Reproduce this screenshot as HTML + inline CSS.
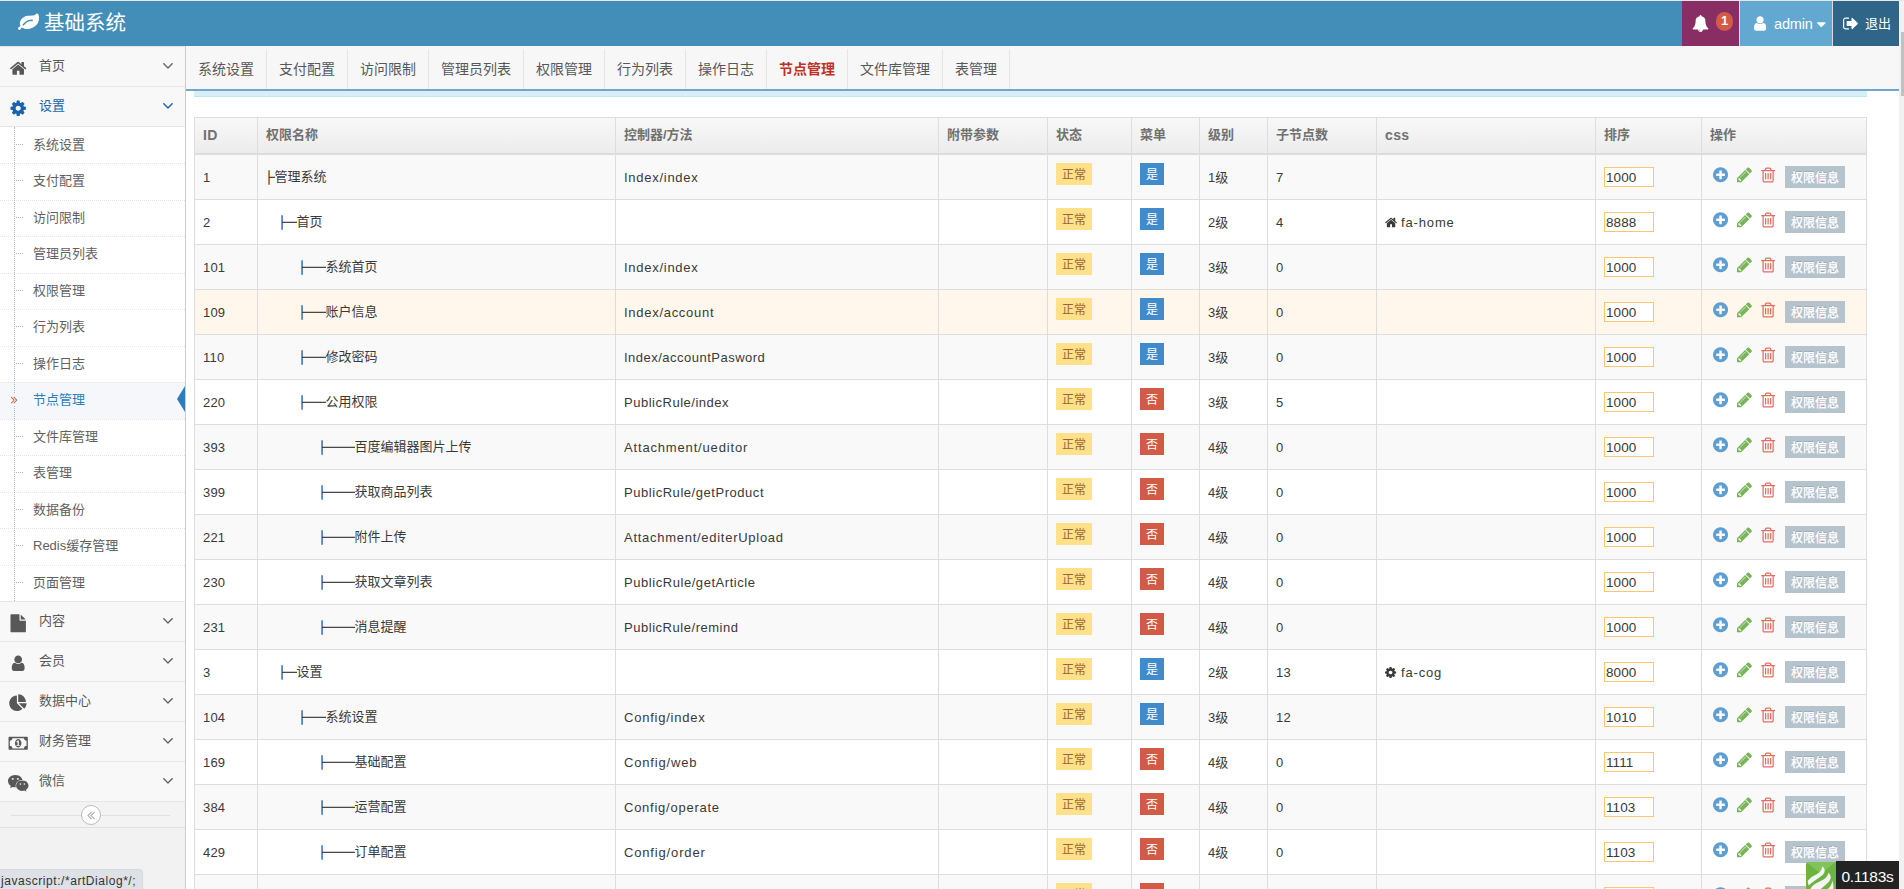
<!DOCTYPE html>
<html lang="zh-CN"><head><meta charset="utf-8"><title>基础系统</title><style>
*{box-sizing:border-box}
html,body{margin:0;padding:0}
body{width:1904px;height:889px;overflow:hidden;position:relative;background:#fff;font-family:"Liberation Sans","Noto Sans CJK SC",sans-serif;font-size:13px;color:#393939;line-height:1.5}
.ic{display:block;position:absolute;overflow:visible}
#topline{position:absolute;left:0;top:0;width:1904px;height:1px;background:#e8e8e6}
#navbar{position:absolute;left:0;top:1px;width:1899px;height:45px;background:#438eb9}
#brand{position:absolute;left:44px;top:0;height:45px;line-height:43px;font-size:20.5px;color:#fff;white-space:nowrap}
.nb{position:absolute;top:0;height:45px;color:#fff}
#nb1{left:1682px;width:57px;background:#892e65}
.gap{position:absolute;top:0;width:1px;height:45px;background:#ddd}
#nb2{left:1740px;width:92px;background:#62a8d1}
#nb3{left:1833px;width:66px;background:#2e6589}
#badge{position:absolute;left:34px;top:11px;width:17px;height:19px;border-radius:10px;background:#d15b47;color:#fff;font-size:13px;font-weight:bold;line-height:18px;text-align:center}
#admin{position:absolute;left:34px;top:0;line-height:47px;font-size:14.5px;letter-spacing:-.15px}
#logout{position:absolute;left:32px;top:0;line-height:45px;font-size:13px}
#sbtrack{position:absolute;left:1899px;top:1px;width:5px;height:888px;background:#f1f1f1}
#sbthumb{position:absolute;left:1901px;top:32.4px;width:3px;height:64px;background:#c1c1c1}
#sidebar{position:absolute;left:0;top:46px;width:186px;height:843px;background:#f2f2f2;border-right:1px solid #ccc}
.mi{position:relative;height:40px;border-top:1px solid #e5e5e5;background:#f8f8f8;color:#585858;font-size:13px;line-height:38px;padding-left:39px}
.mi.open{color:#1963aa}
.sub{background:#fff;border-top:1px solid #e5e5e5;position:relative}
.sub .vline{position:absolute;left:14px;top:0;bottom:0;width:0;border-left:1px dotted #9dbdd6;z-index:1}
.si{position:relative;height:36.5px;border-top:1px dotted #e4e4e4;color:#616161;font-size:13px;line-height:33px;padding-left:33px}
.si.first{border-top-color:transparent;height:36px}
.si .stub{position:absolute;left:16px;top:16px;width:7px;border-top:1px dotted #9dbdd6}
.si.act{background:#f5f7fa;color:#2b7dbc}
.si.act .tri{position:absolute;right:0;top:3px;width:0;height:0;border-top:13.5px solid transparent;border-bottom:13.5px solid transparent;border-right:8px solid #2b7dbc}
.si.act .mask{position:absolute;left:12px;top:10px;width:6px;height:13px;background:#f5f7fa;z-index:2}
#collapse{position:relative;height:27px;border-top:1px solid #e5e5e5;border-bottom:1px solid #e0e0e0;background:#f3f3f3}
#collapse .ln{position:absolute;left:11px;width:159px;top:13px;border-top:1px solid #e0e0e0}
#collapse .cr{position:absolute;left:81px;top:3px;width:20px;height:20px;border-radius:10px;border:1px solid #bbb;background:#fff}
#status{position:absolute;left:0;top:869px;width:143px;height:20px;background:#dee1e6;border-top:1px solid #d5d8dc;border-right:1px solid #d5d8dc;border-top-right-radius:4px;font-size:12px;line-height:22px;color:#333;padding-left:1px;white-space:nowrap;letter-spacing:0.55px}
#tabs{position:absolute;left:186px;top:46px;width:1713px;height:45px;background:#f7f7f7;border-bottom:2px solid #6fa7d0}
.tab{float:left;height:40px;margin-top:3px;padding:0 12px;border-right:1px solid #e5e5e5;font-size:14px;line-height:40px;color:#585858}
.tab.on{color:#c03028;font-weight:bold}
#alert{position:absolute;left:194px;top:91px;width:1673px;height:6px;background:#d9edf7;border-bottom:1px solid #bce8f1}
table{position:absolute;left:194px;top:117px;width:1673px;border-collapse:separate;border-spacing:0;table-layout:fixed;border-right:1px solid #ddd}
th,td{border-left:1px solid #ddd;border-top:1px solid #ddd;padding:0 8px;text-align:left;white-space:nowrap;overflow:hidden;position:relative}
th{height:38px;border-bottom:2px solid #ddd;background:linear-gradient(to bottom,#f8f8f8 0,#ececec 100%);color:#707070;font-weight:bold;font-size:13px;line-height:34px;vertical-align:top}
.hl{font-size:14px;letter-spacing:.35px}
td{height:45px;padding-top:1px;line-height:43px;vertical-align:top;font-size:13px;color:#393939}
.la2{letter-spacing:.2px}
.nm{position:relative;top:-1px}
tbody tr:nth-child(odd) td{background:#f9f9f9}
tbody tr.hov td{background:#fff7eb}
tbody tr:first-child td{border-top:0;height:44px}
.lb{display:inline-block;vertical-align:top;margin-top:7px;height:22px;line-height:25px;padding:0 6px;font-size:12px}
.ly{background:#fee188;color:#996633}
.lp{background:#428bca;color:#fff}
.ld{background:#d15b47;color:#fff}
.inp{display:block;position:absolute;left:8px;top:12px;width:50px;height:20px;border:1px solid #fbc66f;background:#fff;font-size:13.5px;line-height:19.5px;padding-left:1px;color:#393939;letter-spacing:.1px}
.btn{position:absolute;left:83px;top:11px;width:60px;height:22px;background:#b5c3cd;color:#fff;font-size:12px;font-weight:500;line-height:25px;text-align:center;text-shadow:0 1px 0 rgba(255,255,255,.45),0 -1px 0 rgba(0,0,0,.12)}
.pre{font-family:"Noto Sans CJK SC",sans-serif;font-weight:normal;line-height:1;-webkit-text-stroke:0.45px #393939}
.pre i{font-style:normal;display:inline-block;overflow:hidden;vertical-align:top;height:43px;line-height:43px}
#trace{position:absolute;left:1806px;top:861px;width:93px;height:28px}
#trace .g{position:absolute;left:0;top:1px;width:30px;height:30px;background:#6db33f;overflow:hidden;border-top-left-radius:3px}
#trace .k{position:absolute;left:30px;top:0;width:63px;height:28px;background:#232323;color:#fff;font-size:15.5px;line-height:31px;padding-left:5.5px;letter-spacing:-.3px}
</style></head><body>
<div id="topline"></div>
<div id="navbar">
<svg class="ic" width="21.0" height="21" viewBox="0.0 -1536.0 1792 1792" style="left:18px;top:11px"><path fill="#fff" transform="scale(1 -1)" d="M1280 832q0 26 -19 45t-45 19q-172 0 -318 -49.5t-259.5 -134t-235.5 -219.5q-19 -21 -19 -45q0 -26 19 -45t45 -19q24 0 45 19q27 24 74 71t67 66q137 124 268.5 176t313.5 52q26 0 45 19t19 45zM1792 1030q0 -95 -20 -193q-46 -224 -184.5 -383t-357.5 -268 q-214 -108 -438 -108q-148 0 -286 47q-15 5 -88 42t-96 37q-16 0 -39.5 -32t-45 -70t-52.5 -70t-60 -32q-43 0 -63.5 17.5t-45.5 59.5q-2 4 -6 11t-5.5 10t-3 9.5t-1.5 13.5q0 35 31 73.5t68 65.5t68 56t31 48q0 4 -14 38t-16 44q-9 51 -9 104q0 115 43.5 220t119 184.5 t170.5 139t204 95.5q55 18 145 25.5t179.5 9t178.5 6t163.5 24t113.5 56.5l29.5 29.5t29.5 28t27 20t36.5 16t43.5 4.5q39 0 70.5 -46t47.5 -112t24 -124t8 -96z"/></svg><div id="brand">基础系统</div>
<div class="nb" id="nb1"><svg class="ic" width="17.0" height="17" viewBox="0.0 -1536.0 1792 1792" style="left:9.5px;top:13.5px"><path fill="#fff" transform="scale(1 -1)" d="M912 -160q0 16 -16 16q-59 0 -101.5 42.5t-42.5 101.5q0 16 -16 16t-16 -16q0 -73 51.5 -124.5t124.5 -51.5q16 0 16 16zM1728 128q0 -52 -38 -90t-90 -38h-448q0 -106 -75 -181t-181 -75t-181 75t-75 181h-448q-52 0 -90 38t-38 90q50 42 91 88t85 119.5t74.5 158.5 t50 206t19.5 260q0 152 117 282.5t307 158.5q-8 19 -8 39q0 40 28 68t68 28t68 -28t28 -68q0 -20 -8 -39q190 -28 307 -158.5t117 -282.5q0 -139 19.5 -260t50 -206t74.5 -158.5t85 -119.5t91 -88z"/></svg><div id="badge">1</div></div>
<div class="gap" style="left:1739px"></div><div class="gap" style="left:1832px"></div><div class="nb" id="nb2"><svg class="ic" width="12.14" height="17" viewBox="0.0 -1536.0 1280 1792" style="left:13.5px;top:14px"><path fill="#fff" transform="scale(1 -1)" d="M1280 137q0 -109 -62.5 -187t-150.5 -78h-854q-88 0 -150.5 78t-62.5 187q0 85 8.5 160.5t31.5 152t58.5 131t94 89t134.5 34.5q131 -128 313 -128t313 128q76 0 134.5 -34.5t94 -89t58.5 -131t31.5 -152t8.5 -160.5zM1024 1024q0 -159 -112.5 -271.5t-271.5 -112.5 t-271.5 112.5t-112.5 271.5t112.5 271.5t271.5 112.5t271.5 -112.5t112.5 -271.5z"/></svg><div id="admin">admin</div><svg class="ic" width="8.57" height="15" viewBox="0.0 -1536.0 1024 1792" style="left:76.5px;top:16px"><path fill="#fff" transform="scale(1 -1)" d="M1024 832q0 -26 -19 -45l-448 -448q-19 -19 -45 -19t-45 19l-448 448q-19 19 -19 45t19 45t45 19h896q26 0 45 -19t19 -45z"/></svg></div>
<div class="nb" id="nb3"><svg class="ic" width="15.79" height="17" viewBox="0.0 -1536.0 1664 1792" style="left:10px;top:13.5px"><path fill="#fff" transform="scale(1 -1)" d="M640 96q0 -4 1 -20t0.5 -26.5t-3 -23.5t-10 -19.5t-20.5 -6.5h-320q-119 0 -203.5 84.5t-84.5 203.5v704q0 119 84.5 203.5t203.5 84.5h320q13 0 22.5 -9.5t9.5 -22.5q0 -4 1 -20t0.5 -26.5t-3 -23.5t-10 -19.5t-20.5 -6.5h-320q-66 0 -113 -47t-47 -113v-704 q0 -66 47 -113t113 -47h288h11h13t11.5 -1t11.5 -3t8 -5.5t7 -9t2 -13.5zM1568 640q0 -26 -19 -45l-544 -544q-19 -19 -45 -19t-45 19t-19 45v288h-448q-26 0 -45 19t-19 45v384q0 26 19 45t45 19h448v288q0 26 19 45t45 19t45 -19l544 -544q19 -19 19 -45z"/></svg><div id="logout">退出</div></div>
</div>
<div id="sbtrack"></div><div id="sbthumb"></div>
<div id="tabs"><div class="tab">系统设置</div><div class="tab">支付配置</div><div class="tab">访问限制</div><div class="tab">管理员列表</div><div class="tab">权限管理</div><div class="tab">行为列表</div><div class="tab">操作日志</div><div class="tab on">节点管理</div><div class="tab">文件库管理</div><div class="tab">表管理</div></div>
<div id="alert"></div>
<table><colgroup><col style="width:63px"><col style="width:358px"><col style="width:323px"><col style="width:109px"><col style="width:84px"><col style="width:68px"><col style="width:68px"><col style="width:109px"><col style="width:219px"><col style="width:106px"><col style="width:165px"></colgroup><thead><tr><th><span class="hl">ID</span></th><th>权限名称</th><th>控制器/方法</th><th>附带参数</th><th>状态</th><th>菜单</th><th>级别</th><th>子节点数</th><th><span class="hl">css</span></th><th>排序</th><th>操作</th></tr></thead><tbody><tr><td class="la2">1</td><td><span class="nm"><span class="pre" style="margin-left:-3.5px"><i style="width:12px">├</i></span>管理系统</span></td><td><span style="letter-spacing:0.73px">Index/index</span></td><td></td><td><span class="lb ly">正常</span></td><td><span class="lb lp">是</span></td><td>1级</td><td class="la2">7</td><td></td><td><div class="inp">1000</div></td><td><svg class="ic" width="15.09" height="17.6" viewBox="0.0 -1536.0 1536 1792" style="left:10.7px;top:11.2px"><path fill="#5e9fd3" transform="scale(1 -1)" d="M1216 576v128q0 26 -19 45t-45 19h-256v256q0 26 -19 45t-45 19h-128q-26 0 -45 -19t-19 -45v-256h-256q-26 0 -45 -19t-19 -45v-128q0 -26 19 -45t45 -19h256v-256q0 -26 19 -45t45 -19h128q26 0 45 19t19 45v256h256q26 0 45 19t19 45zM1536 640q0 -209 -103 -385.5 t-279.5 -279.5t-385.5 -103t-385.5 103t-279.5 279.5t-103 385.5t103 385.5t279.5 279.5t385.5 103t385.5 -103t279.5 -279.5t103 -385.5z"/></svg><svg class="ic" width="15.09" height="17.6" viewBox="0.0 -1536.0 1536 1792" style="left:34.8px;top:11.2px"><path fill="#78b45a" transform="scale(1 -1)" d="M363 0l91 91l-235 235l-91 -91v-107h128v-128h107zM886 928q0 22 -22 22q-10 0 -17 -7l-542 -542q-7 -7 -7 -17q0 -22 22 -22q10 0 17 7l542 542q7 7 7 17zM832 1120l416 -416l-832 -832h-416v416zM1515 1024q0 -53 -37 -90l-166 -166l-416 416l166 165q36 38 90 38 q53 0 91 -38l235 -234q37 -39 37 -91z"/></svg><svg class="ic" width="13.83" height="17.6" viewBox="-20.4 -1556.4 1408 1792" style="left:59px;top:11px"><path fill="#e0705c" transform="scale(1 -1)" d="M512 800v-576q0 -14 -9 -23t-23 -9h-64q-14 0 -23 9t-9 23v576q0 14 9 23t23 9h64q14 0 23 -9t9 -23zM768 800v-576q0 -14 -9 -23t-23 -9h-64q-14 0 -23 9t-9 23v576q0 14 9 23t23 9h64q14 0 23 -9t9 -23zM1024 800v-576q0 -14 -9 -23t-23 -9h-64q-14 0 -23 9t-9 23v576 q0 14 9 23t23 9h64q14 0 23 -9t9 -23zM1152 76v948h-896v-948q0 -22 7 -40.5t14.5 -27t10.5 -8.5h832q3 0 10.5 8.5t14.5 27t7 40.5zM480 1152h448l-48 117q-7 9 -17 11h-317q-10 -2 -17 -11zM1408 1120v-64q0 -14 -9 -23t-23 -9h-96v-948q0 -83 -47 -143.5t-113 -60.5h-832 q-66 0 -113 58.5t-47 141.5v952h-96q-14 0 -23 9t-9 23v64q0 14 9 23t23 9h309l70 167q15 37 54 63t79 26h320q40 0 79 -26t54 -63l70 -167h309q14 0 23 -9t9 -23z"/></svg><div class="btn">权限信息</div></td></tr><tr><td class="la2">2</td><td><span class="nm"><span class="pre" style="margin-left:9.5px"><i style="width:12px">├</i><i style="width:9px">─</i></span>首页</span></td><td></td><td></td><td><span class="lb ly">正常</span></td><td><span class="lb lp">是</span></td><td>2级</td><td class="la2">4</td><td><svg class="ic" width="12.07" height="13" viewBox="0.0 -1536.0 1664 1792" style="left:8px;top:16px"><path fill="#393939" transform="scale(1 -1)" d="M1408 544v-480q0 -26 -19 -45t-45 -19h-384v384h-256v-384h-384q-26 0 -45 19t-19 45v480q0 1 0.5 3t0.5 3l575 474l575 -474q1 -2 1 -6zM1631 613l-62 -74q-8 -9 -21 -11h-3q-13 0 -21 7l-692 577l-692 -577q-12 -8 -24 -7q-13 2 -21 11l-62 74q-8 10 -7 23.5t11 21.5 l719 599q32 26 76 26t76 -26l244 -204v195q0 14 9 23t23 9h192q14 0 23 -9t9 -23v-408l219 -182q10 -8 11 -21.5t-7 -23.5z"/></svg><span style="padding-left:16px;letter-spacing:0.849px">fa-home</span></td><td><div class="inp">8888</div></td><td><svg class="ic" width="15.09" height="17.6" viewBox="0.0 -1536.0 1536 1792" style="left:10.7px;top:11.2px"><path fill="#5e9fd3" transform="scale(1 -1)" d="M1216 576v128q0 26 -19 45t-45 19h-256v256q0 26 -19 45t-45 19h-128q-26 0 -45 -19t-19 -45v-256h-256q-26 0 -45 -19t-19 -45v-128q0 -26 19 -45t45 -19h256v-256q0 -26 19 -45t45 -19h128q26 0 45 19t19 45v256h256q26 0 45 19t19 45zM1536 640q0 -209 -103 -385.5 t-279.5 -279.5t-385.5 -103t-385.5 103t-279.5 279.5t-103 385.5t103 385.5t279.5 279.5t385.5 103t385.5 -103t279.5 -279.5t103 -385.5z"/></svg><svg class="ic" width="15.09" height="17.6" viewBox="0.0 -1536.0 1536 1792" style="left:34.8px;top:11.2px"><path fill="#78b45a" transform="scale(1 -1)" d="M363 0l91 91l-235 235l-91 -91v-107h128v-128h107zM886 928q0 22 -22 22q-10 0 -17 -7l-542 -542q-7 -7 -7 -17q0 -22 22 -22q10 0 17 7l542 542q7 7 7 17zM832 1120l416 -416l-832 -832h-416v416zM1515 1024q0 -53 -37 -90l-166 -166l-416 416l166 165q36 38 90 38 q53 0 91 -38l235 -234q37 -39 37 -91z"/></svg><svg class="ic" width="13.83" height="17.6" viewBox="-20.4 -1556.4 1408 1792" style="left:59px;top:11px"><path fill="#e0705c" transform="scale(1 -1)" d="M512 800v-576q0 -14 -9 -23t-23 -9h-64q-14 0 -23 9t-9 23v576q0 14 9 23t23 9h64q14 0 23 -9t9 -23zM768 800v-576q0 -14 -9 -23t-23 -9h-64q-14 0 -23 9t-9 23v576q0 14 9 23t23 9h64q14 0 23 -9t9 -23zM1024 800v-576q0 -14 -9 -23t-23 -9h-64q-14 0 -23 9t-9 23v576 q0 14 9 23t23 9h64q14 0 23 -9t9 -23zM1152 76v948h-896v-948q0 -22 7 -40.5t14.5 -27t10.5 -8.5h832q3 0 10.5 8.5t14.5 27t7 40.5zM480 1152h448l-48 117q-7 9 -17 11h-317q-10 -2 -17 -11zM1408 1120v-64q0 -14 -9 -23t-23 -9h-96v-948q0 -83 -47 -143.5t-113 -60.5h-832 q-66 0 -113 58.5t-47 141.5v952h-96q-14 0 -23 9t-9 23v64q0 14 9 23t23 9h309l70 167q15 37 54 63t79 26h320q40 0 79 -26t54 -63l70 -167h309q14 0 23 -9t9 -23z"/></svg><div class="btn">权限信息</div></td></tr><tr><td class="la2">101</td><td><span class="nm"><span class="pre" style="margin-left:29.5px"><i style="width:12px">├</i><i style="width:9px">─</i><i style="width:9px">─</i></span>系统首页</span></td><td><span style="letter-spacing:0.73px">Index/index</span></td><td></td><td><span class="lb ly">正常</span></td><td><span class="lb lp">是</span></td><td>3级</td><td class="la2">0</td><td></td><td><div class="inp">1000</div></td><td><svg class="ic" width="15.09" height="17.6" viewBox="0.0 -1536.0 1536 1792" style="left:10.7px;top:11.2px"><path fill="#5e9fd3" transform="scale(1 -1)" d="M1216 576v128q0 26 -19 45t-45 19h-256v256q0 26 -19 45t-45 19h-128q-26 0 -45 -19t-19 -45v-256h-256q-26 0 -45 -19t-19 -45v-128q0 -26 19 -45t45 -19h256v-256q0 -26 19 -45t45 -19h128q26 0 45 19t19 45v256h256q26 0 45 19t19 45zM1536 640q0 -209 -103 -385.5 t-279.5 -279.5t-385.5 -103t-385.5 103t-279.5 279.5t-103 385.5t103 385.5t279.5 279.5t385.5 103t385.5 -103t279.5 -279.5t103 -385.5z"/></svg><svg class="ic" width="15.09" height="17.6" viewBox="0.0 -1536.0 1536 1792" style="left:34.8px;top:11.2px"><path fill="#78b45a" transform="scale(1 -1)" d="M363 0l91 91l-235 235l-91 -91v-107h128v-128h107zM886 928q0 22 -22 22q-10 0 -17 -7l-542 -542q-7 -7 -7 -17q0 -22 22 -22q10 0 17 7l542 542q7 7 7 17zM832 1120l416 -416l-832 -832h-416v416zM1515 1024q0 -53 -37 -90l-166 -166l-416 416l166 165q36 38 90 38 q53 0 91 -38l235 -234q37 -39 37 -91z"/></svg><svg class="ic" width="13.83" height="17.6" viewBox="-20.4 -1556.4 1408 1792" style="left:59px;top:11px"><path fill="#e0705c" transform="scale(1 -1)" d="M512 800v-576q0 -14 -9 -23t-23 -9h-64q-14 0 -23 9t-9 23v576q0 14 9 23t23 9h64q14 0 23 -9t9 -23zM768 800v-576q0 -14 -9 -23t-23 -9h-64q-14 0 -23 9t-9 23v576q0 14 9 23t23 9h64q14 0 23 -9t9 -23zM1024 800v-576q0 -14 -9 -23t-23 -9h-64q-14 0 -23 9t-9 23v576 q0 14 9 23t23 9h64q14 0 23 -9t9 -23zM1152 76v948h-896v-948q0 -22 7 -40.5t14.5 -27t10.5 -8.5h832q3 0 10.5 8.5t14.5 27t7 40.5zM480 1152h448l-48 117q-7 9 -17 11h-317q-10 -2 -17 -11zM1408 1120v-64q0 -14 -9 -23t-23 -9h-96v-948q0 -83 -47 -143.5t-113 -60.5h-832 q-66 0 -113 58.5t-47 141.5v952h-96q-14 0 -23 9t-9 23v64q0 14 9 23t23 9h309l70 167q15 37 54 63t79 26h320q40 0 79 -26t54 -63l70 -167h309q14 0 23 -9t9 -23z"/></svg><div class="btn">权限信息</div></td></tr><tr class="hov"><td class="la2">109</td><td><span class="nm"><span class="pre" style="margin-left:29.5px"><i style="width:12px">├</i><i style="width:9px">─</i><i style="width:9px">─</i></span>账户信息</span></td><td><span style="letter-spacing:0.716px">Index/account</span></td><td></td><td><span class="lb ly">正常</span></td><td><span class="lb lp">是</span></td><td>3级</td><td class="la2">0</td><td></td><td><div class="inp">1000</div></td><td><svg class="ic" width="15.09" height="17.6" viewBox="0.0 -1536.0 1536 1792" style="left:10.7px;top:11.2px"><path fill="#5e9fd3" transform="scale(1 -1)" d="M1216 576v128q0 26 -19 45t-45 19h-256v256q0 26 -19 45t-45 19h-128q-26 0 -45 -19t-19 -45v-256h-256q-26 0 -45 -19t-19 -45v-128q0 -26 19 -45t45 -19h256v-256q0 -26 19 -45t45 -19h128q26 0 45 19t19 45v256h256q26 0 45 19t19 45zM1536 640q0 -209 -103 -385.5 t-279.5 -279.5t-385.5 -103t-385.5 103t-279.5 279.5t-103 385.5t103 385.5t279.5 279.5t385.5 103t385.5 -103t279.5 -279.5t103 -385.5z"/></svg><svg class="ic" width="15.09" height="17.6" viewBox="0.0 -1536.0 1536 1792" style="left:34.8px;top:11.2px"><path fill="#78b45a" transform="scale(1 -1)" d="M363 0l91 91l-235 235l-91 -91v-107h128v-128h107zM886 928q0 22 -22 22q-10 0 -17 -7l-542 -542q-7 -7 -7 -17q0 -22 22 -22q10 0 17 7l542 542q7 7 7 17zM832 1120l416 -416l-832 -832h-416v416zM1515 1024q0 -53 -37 -90l-166 -166l-416 416l166 165q36 38 90 38 q53 0 91 -38l235 -234q37 -39 37 -91z"/></svg><svg class="ic" width="13.83" height="17.6" viewBox="-20.4 -1556.4 1408 1792" style="left:59px;top:11px"><path fill="#e0705c" transform="scale(1 -1)" d="M512 800v-576q0 -14 -9 -23t-23 -9h-64q-14 0 -23 9t-9 23v576q0 14 9 23t23 9h64q14 0 23 -9t9 -23zM768 800v-576q0 -14 -9 -23t-23 -9h-64q-14 0 -23 9t-9 23v576q0 14 9 23t23 9h64q14 0 23 -9t9 -23zM1024 800v-576q0 -14 -9 -23t-23 -9h-64q-14 0 -23 9t-9 23v576 q0 14 9 23t23 9h64q14 0 23 -9t9 -23zM1152 76v948h-896v-948q0 -22 7 -40.5t14.5 -27t10.5 -8.5h832q3 0 10.5 8.5t14.5 27t7 40.5zM480 1152h448l-48 117q-7 9 -17 11h-317q-10 -2 -17 -11zM1408 1120v-64q0 -14 -9 -23t-23 -9h-96v-948q0 -83 -47 -143.5t-113 -60.5h-832 q-66 0 -113 58.5t-47 141.5v952h-96q-14 0 -23 9t-9 23v64q0 14 9 23t23 9h309l70 167q15 37 54 63t79 26h320q40 0 79 -26t54 -63l70 -167h309q14 0 23 -9t9 -23z"/></svg><div class="btn">权限信息</div></td></tr><tr><td class="la2">110</td><td><span class="nm"><span class="pre" style="margin-left:29.5px"><i style="width:12px">├</i><i style="width:9px">─</i><i style="width:9px">─</i></span>修改密码</span></td><td><span style="letter-spacing:0.488px">Index/accountPasword</span></td><td></td><td><span class="lb ly">正常</span></td><td><span class="lb lp">是</span></td><td>3级</td><td class="la2">0</td><td></td><td><div class="inp">1000</div></td><td><svg class="ic" width="15.09" height="17.6" viewBox="0.0 -1536.0 1536 1792" style="left:10.7px;top:11.2px"><path fill="#5e9fd3" transform="scale(1 -1)" d="M1216 576v128q0 26 -19 45t-45 19h-256v256q0 26 -19 45t-45 19h-128q-26 0 -45 -19t-19 -45v-256h-256q-26 0 -45 -19t-19 -45v-128q0 -26 19 -45t45 -19h256v-256q0 -26 19 -45t45 -19h128q26 0 45 19t19 45v256h256q26 0 45 19t19 45zM1536 640q0 -209 -103 -385.5 t-279.5 -279.5t-385.5 -103t-385.5 103t-279.5 279.5t-103 385.5t103 385.5t279.5 279.5t385.5 103t385.5 -103t279.5 -279.5t103 -385.5z"/></svg><svg class="ic" width="15.09" height="17.6" viewBox="0.0 -1536.0 1536 1792" style="left:34.8px;top:11.2px"><path fill="#78b45a" transform="scale(1 -1)" d="M363 0l91 91l-235 235l-91 -91v-107h128v-128h107zM886 928q0 22 -22 22q-10 0 -17 -7l-542 -542q-7 -7 -7 -17q0 -22 22 -22q10 0 17 7l542 542q7 7 7 17zM832 1120l416 -416l-832 -832h-416v416zM1515 1024q0 -53 -37 -90l-166 -166l-416 416l166 165q36 38 90 38 q53 0 91 -38l235 -234q37 -39 37 -91z"/></svg><svg class="ic" width="13.83" height="17.6" viewBox="-20.4 -1556.4 1408 1792" style="left:59px;top:11px"><path fill="#e0705c" transform="scale(1 -1)" d="M512 800v-576q0 -14 -9 -23t-23 -9h-64q-14 0 -23 9t-9 23v576q0 14 9 23t23 9h64q14 0 23 -9t9 -23zM768 800v-576q0 -14 -9 -23t-23 -9h-64q-14 0 -23 9t-9 23v576q0 14 9 23t23 9h64q14 0 23 -9t9 -23zM1024 800v-576q0 -14 -9 -23t-23 -9h-64q-14 0 -23 9t-9 23v576 q0 14 9 23t23 9h64q14 0 23 -9t9 -23zM1152 76v948h-896v-948q0 -22 7 -40.5t14.5 -27t10.5 -8.5h832q3 0 10.5 8.5t14.5 27t7 40.5zM480 1152h448l-48 117q-7 9 -17 11h-317q-10 -2 -17 -11zM1408 1120v-64q0 -14 -9 -23t-23 -9h-96v-948q0 -83 -47 -143.5t-113 -60.5h-832 q-66 0 -113 58.5t-47 141.5v952h-96q-14 0 -23 9t-9 23v64q0 14 9 23t23 9h309l70 167q15 37 54 63t79 26h320q40 0 79 -26t54 -63l70 -167h309q14 0 23 -9t9 -23z"/></svg><div class="btn">权限信息</div></td></tr><tr><td class="la2">220</td><td><span class="nm"><span class="pre" style="margin-left:29.5px"><i style="width:12px">├</i><i style="width:9px">─</i><i style="width:9px">─</i></span>公用权限</span></td><td><span style="letter-spacing:0.514px">PublicRule/index</span></td><td></td><td><span class="lb ly">正常</span></td><td><span class="lb ld">否</span></td><td>3级</td><td class="la2">5</td><td></td><td><div class="inp">1000</div></td><td><svg class="ic" width="15.09" height="17.6" viewBox="0.0 -1536.0 1536 1792" style="left:10.7px;top:11.2px"><path fill="#5e9fd3" transform="scale(1 -1)" d="M1216 576v128q0 26 -19 45t-45 19h-256v256q0 26 -19 45t-45 19h-128q-26 0 -45 -19t-19 -45v-256h-256q-26 0 -45 -19t-19 -45v-128q0 -26 19 -45t45 -19h256v-256q0 -26 19 -45t45 -19h128q26 0 45 19t19 45v256h256q26 0 45 19t19 45zM1536 640q0 -209 -103 -385.5 t-279.5 -279.5t-385.5 -103t-385.5 103t-279.5 279.5t-103 385.5t103 385.5t279.5 279.5t385.5 103t385.5 -103t279.5 -279.5t103 -385.5z"/></svg><svg class="ic" width="15.09" height="17.6" viewBox="0.0 -1536.0 1536 1792" style="left:34.8px;top:11.2px"><path fill="#78b45a" transform="scale(1 -1)" d="M363 0l91 91l-235 235l-91 -91v-107h128v-128h107zM886 928q0 22 -22 22q-10 0 -17 -7l-542 -542q-7 -7 -7 -17q0 -22 22 -22q10 0 17 7l542 542q7 7 7 17zM832 1120l416 -416l-832 -832h-416v416zM1515 1024q0 -53 -37 -90l-166 -166l-416 416l166 165q36 38 90 38 q53 0 91 -38l235 -234q37 -39 37 -91z"/></svg><svg class="ic" width="13.83" height="17.6" viewBox="-20.4 -1556.4 1408 1792" style="left:59px;top:11px"><path fill="#e0705c" transform="scale(1 -1)" d="M512 800v-576q0 -14 -9 -23t-23 -9h-64q-14 0 -23 9t-9 23v576q0 14 9 23t23 9h64q14 0 23 -9t9 -23zM768 800v-576q0 -14 -9 -23t-23 -9h-64q-14 0 -23 9t-9 23v576q0 14 9 23t23 9h64q14 0 23 -9t9 -23zM1024 800v-576q0 -14 -9 -23t-23 -9h-64q-14 0 -23 9t-9 23v576 q0 14 9 23t23 9h64q14 0 23 -9t9 -23zM1152 76v948h-896v-948q0 -22 7 -40.5t14.5 -27t10.5 -8.5h832q3 0 10.5 8.5t14.5 27t7 40.5zM480 1152h448l-48 117q-7 9 -17 11h-317q-10 -2 -17 -11zM1408 1120v-64q0 -14 -9 -23t-23 -9h-96v-948q0 -83 -47 -143.5t-113 -60.5h-832 q-66 0 -113 58.5t-47 141.5v952h-96q-14 0 -23 9t-9 23v64q0 14 9 23t23 9h309l70 167q15 37 54 63t79 26h320q40 0 79 -26t54 -63l70 -167h309q14 0 23 -9t9 -23z"/></svg><div class="btn">权限信息</div></td></tr><tr><td class="la2">393</td><td><span class="nm"><span class="pre" style="margin-left:49.5px"><i style="width:12px">├</i><i style="width:9px">─</i><i style="width:9px">─</i><i style="width:9px">─</i></span>百度编辑器图片上传</span></td><td><span style="letter-spacing:0.834px">Attachment/ueditor</span></td><td></td><td><span class="lb ly">正常</span></td><td><span class="lb ld">否</span></td><td>4级</td><td class="la2">0</td><td></td><td><div class="inp">1000</div></td><td><svg class="ic" width="15.09" height="17.6" viewBox="0.0 -1536.0 1536 1792" style="left:10.7px;top:11.2px"><path fill="#5e9fd3" transform="scale(1 -1)" d="M1216 576v128q0 26 -19 45t-45 19h-256v256q0 26 -19 45t-45 19h-128q-26 0 -45 -19t-19 -45v-256h-256q-26 0 -45 -19t-19 -45v-128q0 -26 19 -45t45 -19h256v-256q0 -26 19 -45t45 -19h128q26 0 45 19t19 45v256h256q26 0 45 19t19 45zM1536 640q0 -209 -103 -385.5 t-279.5 -279.5t-385.5 -103t-385.5 103t-279.5 279.5t-103 385.5t103 385.5t279.5 279.5t385.5 103t385.5 -103t279.5 -279.5t103 -385.5z"/></svg><svg class="ic" width="15.09" height="17.6" viewBox="0.0 -1536.0 1536 1792" style="left:34.8px;top:11.2px"><path fill="#78b45a" transform="scale(1 -1)" d="M363 0l91 91l-235 235l-91 -91v-107h128v-128h107zM886 928q0 22 -22 22q-10 0 -17 -7l-542 -542q-7 -7 -7 -17q0 -22 22 -22q10 0 17 7l542 542q7 7 7 17zM832 1120l416 -416l-832 -832h-416v416zM1515 1024q0 -53 -37 -90l-166 -166l-416 416l166 165q36 38 90 38 q53 0 91 -38l235 -234q37 -39 37 -91z"/></svg><svg class="ic" width="13.83" height="17.6" viewBox="-20.4 -1556.4 1408 1792" style="left:59px;top:11px"><path fill="#e0705c" transform="scale(1 -1)" d="M512 800v-576q0 -14 -9 -23t-23 -9h-64q-14 0 -23 9t-9 23v576q0 14 9 23t23 9h64q14 0 23 -9t9 -23zM768 800v-576q0 -14 -9 -23t-23 -9h-64q-14 0 -23 9t-9 23v576q0 14 9 23t23 9h64q14 0 23 -9t9 -23zM1024 800v-576q0 -14 -9 -23t-23 -9h-64q-14 0 -23 9t-9 23v576 q0 14 9 23t23 9h64q14 0 23 -9t9 -23zM1152 76v948h-896v-948q0 -22 7 -40.5t14.5 -27t10.5 -8.5h832q3 0 10.5 8.5t14.5 27t7 40.5zM480 1152h448l-48 117q-7 9 -17 11h-317q-10 -2 -17 -11zM1408 1120v-64q0 -14 -9 -23t-23 -9h-96v-948q0 -83 -47 -143.5t-113 -60.5h-832 q-66 0 -113 58.5t-47 141.5v952h-96q-14 0 -23 9t-9 23v64q0 14 9 23t23 9h309l70 167q15 37 54 63t79 26h320q40 0 79 -26t54 -63l70 -167h309q14 0 23 -9t9 -23z"/></svg><div class="btn">权限信息</div></td></tr><tr><td class="la2">399</td><td><span class="nm"><span class="pre" style="margin-left:49.5px"><i style="width:12px">├</i><i style="width:9px">─</i><i style="width:9px">─</i><i style="width:9px">─</i></span>获取商品列表</span></td><td><span style="letter-spacing:0.545px">PublicRule/getProduct</span></td><td></td><td><span class="lb ly">正常</span></td><td><span class="lb ld">否</span></td><td>4级</td><td class="la2">0</td><td></td><td><div class="inp">1000</div></td><td><svg class="ic" width="15.09" height="17.6" viewBox="0.0 -1536.0 1536 1792" style="left:10.7px;top:11.2px"><path fill="#5e9fd3" transform="scale(1 -1)" d="M1216 576v128q0 26 -19 45t-45 19h-256v256q0 26 -19 45t-45 19h-128q-26 0 -45 -19t-19 -45v-256h-256q-26 0 -45 -19t-19 -45v-128q0 -26 19 -45t45 -19h256v-256q0 -26 19 -45t45 -19h128q26 0 45 19t19 45v256h256q26 0 45 19t19 45zM1536 640q0 -209 -103 -385.5 t-279.5 -279.5t-385.5 -103t-385.5 103t-279.5 279.5t-103 385.5t103 385.5t279.5 279.5t385.5 103t385.5 -103t279.5 -279.5t103 -385.5z"/></svg><svg class="ic" width="15.09" height="17.6" viewBox="0.0 -1536.0 1536 1792" style="left:34.8px;top:11.2px"><path fill="#78b45a" transform="scale(1 -1)" d="M363 0l91 91l-235 235l-91 -91v-107h128v-128h107zM886 928q0 22 -22 22q-10 0 -17 -7l-542 -542q-7 -7 -7 -17q0 -22 22 -22q10 0 17 7l542 542q7 7 7 17zM832 1120l416 -416l-832 -832h-416v416zM1515 1024q0 -53 -37 -90l-166 -166l-416 416l166 165q36 38 90 38 q53 0 91 -38l235 -234q37 -39 37 -91z"/></svg><svg class="ic" width="13.83" height="17.6" viewBox="-20.4 -1556.4 1408 1792" style="left:59px;top:11px"><path fill="#e0705c" transform="scale(1 -1)" d="M512 800v-576q0 -14 -9 -23t-23 -9h-64q-14 0 -23 9t-9 23v576q0 14 9 23t23 9h64q14 0 23 -9t9 -23zM768 800v-576q0 -14 -9 -23t-23 -9h-64q-14 0 -23 9t-9 23v576q0 14 9 23t23 9h64q14 0 23 -9t9 -23zM1024 800v-576q0 -14 -9 -23t-23 -9h-64q-14 0 -23 9t-9 23v576 q0 14 9 23t23 9h64q14 0 23 -9t9 -23zM1152 76v948h-896v-948q0 -22 7 -40.5t14.5 -27t10.5 -8.5h832q3 0 10.5 8.5t14.5 27t7 40.5zM480 1152h448l-48 117q-7 9 -17 11h-317q-10 -2 -17 -11zM1408 1120v-64q0 -14 -9 -23t-23 -9h-96v-948q0 -83 -47 -143.5t-113 -60.5h-832 q-66 0 -113 58.5t-47 141.5v952h-96q-14 0 -23 9t-9 23v64q0 14 9 23t23 9h309l70 167q15 37 54 63t79 26h320q40 0 79 -26t54 -63l70 -167h309q14 0 23 -9t9 -23z"/></svg><div class="btn">权限信息</div></td></tr><tr><td class="la2">221</td><td><span class="nm"><span class="pre" style="margin-left:49.5px"><i style="width:12px">├</i><i style="width:9px">─</i><i style="width:9px">─</i><i style="width:9px">─</i></span>附件上传</span></td><td><span style="letter-spacing:0.725px">Attachment/editerUpload</span></td><td></td><td><span class="lb ly">正常</span></td><td><span class="lb ld">否</span></td><td>4级</td><td class="la2">0</td><td></td><td><div class="inp">1000</div></td><td><svg class="ic" width="15.09" height="17.6" viewBox="0.0 -1536.0 1536 1792" style="left:10.7px;top:11.2px"><path fill="#5e9fd3" transform="scale(1 -1)" d="M1216 576v128q0 26 -19 45t-45 19h-256v256q0 26 -19 45t-45 19h-128q-26 0 -45 -19t-19 -45v-256h-256q-26 0 -45 -19t-19 -45v-128q0 -26 19 -45t45 -19h256v-256q0 -26 19 -45t45 -19h128q26 0 45 19t19 45v256h256q26 0 45 19t19 45zM1536 640q0 -209 -103 -385.5 t-279.5 -279.5t-385.5 -103t-385.5 103t-279.5 279.5t-103 385.5t103 385.5t279.5 279.5t385.5 103t385.5 -103t279.5 -279.5t103 -385.5z"/></svg><svg class="ic" width="15.09" height="17.6" viewBox="0.0 -1536.0 1536 1792" style="left:34.8px;top:11.2px"><path fill="#78b45a" transform="scale(1 -1)" d="M363 0l91 91l-235 235l-91 -91v-107h128v-128h107zM886 928q0 22 -22 22q-10 0 -17 -7l-542 -542q-7 -7 -7 -17q0 -22 22 -22q10 0 17 7l542 542q7 7 7 17zM832 1120l416 -416l-832 -832h-416v416zM1515 1024q0 -53 -37 -90l-166 -166l-416 416l166 165q36 38 90 38 q53 0 91 -38l235 -234q37 -39 37 -91z"/></svg><svg class="ic" width="13.83" height="17.6" viewBox="-20.4 -1556.4 1408 1792" style="left:59px;top:11px"><path fill="#e0705c" transform="scale(1 -1)" d="M512 800v-576q0 -14 -9 -23t-23 -9h-64q-14 0 -23 9t-9 23v576q0 14 9 23t23 9h64q14 0 23 -9t9 -23zM768 800v-576q0 -14 -9 -23t-23 -9h-64q-14 0 -23 9t-9 23v576q0 14 9 23t23 9h64q14 0 23 -9t9 -23zM1024 800v-576q0 -14 -9 -23t-23 -9h-64q-14 0 -23 9t-9 23v576 q0 14 9 23t23 9h64q14 0 23 -9t9 -23zM1152 76v948h-896v-948q0 -22 7 -40.5t14.5 -27t10.5 -8.5h832q3 0 10.5 8.5t14.5 27t7 40.5zM480 1152h448l-48 117q-7 9 -17 11h-317q-10 -2 -17 -11zM1408 1120v-64q0 -14 -9 -23t-23 -9h-96v-948q0 -83 -47 -143.5t-113 -60.5h-832 q-66 0 -113 58.5t-47 141.5v952h-96q-14 0 -23 9t-9 23v64q0 14 9 23t23 9h309l70 167q15 37 54 63t79 26h320q40 0 79 -26t54 -63l70 -167h309q14 0 23 -9t9 -23z"/></svg><div class="btn">权限信息</div></td></tr><tr><td class="la2">230</td><td><span class="nm"><span class="pre" style="margin-left:49.5px"><i style="width:12px">├</i><i style="width:9px">─</i><i style="width:9px">─</i><i style="width:9px">─</i></span>获取文章列表</span></td><td><span style="letter-spacing:0.555px">PublicRule/getArticle</span></td><td></td><td><span class="lb ly">正常</span></td><td><span class="lb ld">否</span></td><td>4级</td><td class="la2">0</td><td></td><td><div class="inp">1000</div></td><td><svg class="ic" width="15.09" height="17.6" viewBox="0.0 -1536.0 1536 1792" style="left:10.7px;top:11.2px"><path fill="#5e9fd3" transform="scale(1 -1)" d="M1216 576v128q0 26 -19 45t-45 19h-256v256q0 26 -19 45t-45 19h-128q-26 0 -45 -19t-19 -45v-256h-256q-26 0 -45 -19t-19 -45v-128q0 -26 19 -45t45 -19h256v-256q0 -26 19 -45t45 -19h128q26 0 45 19t19 45v256h256q26 0 45 19t19 45zM1536 640q0 -209 -103 -385.5 t-279.5 -279.5t-385.5 -103t-385.5 103t-279.5 279.5t-103 385.5t103 385.5t279.5 279.5t385.5 103t385.5 -103t279.5 -279.5t103 -385.5z"/></svg><svg class="ic" width="15.09" height="17.6" viewBox="0.0 -1536.0 1536 1792" style="left:34.8px;top:11.2px"><path fill="#78b45a" transform="scale(1 -1)" d="M363 0l91 91l-235 235l-91 -91v-107h128v-128h107zM886 928q0 22 -22 22q-10 0 -17 -7l-542 -542q-7 -7 -7 -17q0 -22 22 -22q10 0 17 7l542 542q7 7 7 17zM832 1120l416 -416l-832 -832h-416v416zM1515 1024q0 -53 -37 -90l-166 -166l-416 416l166 165q36 38 90 38 q53 0 91 -38l235 -234q37 -39 37 -91z"/></svg><svg class="ic" width="13.83" height="17.6" viewBox="-20.4 -1556.4 1408 1792" style="left:59px;top:11px"><path fill="#e0705c" transform="scale(1 -1)" d="M512 800v-576q0 -14 -9 -23t-23 -9h-64q-14 0 -23 9t-9 23v576q0 14 9 23t23 9h64q14 0 23 -9t9 -23zM768 800v-576q0 -14 -9 -23t-23 -9h-64q-14 0 -23 9t-9 23v576q0 14 9 23t23 9h64q14 0 23 -9t9 -23zM1024 800v-576q0 -14 -9 -23t-23 -9h-64q-14 0 -23 9t-9 23v576 q0 14 9 23t23 9h64q14 0 23 -9t9 -23zM1152 76v948h-896v-948q0 -22 7 -40.5t14.5 -27t10.5 -8.5h832q3 0 10.5 8.5t14.5 27t7 40.5zM480 1152h448l-48 117q-7 9 -17 11h-317q-10 -2 -17 -11zM1408 1120v-64q0 -14 -9 -23t-23 -9h-96v-948q0 -83 -47 -143.5t-113 -60.5h-832 q-66 0 -113 58.5t-47 141.5v952h-96q-14 0 -23 9t-9 23v64q0 14 9 23t23 9h309l70 167q15 37 54 63t79 26h320q40 0 79 -26t54 -63l70 -167h309q14 0 23 -9t9 -23z"/></svg><div class="btn">权限信息</div></td></tr><tr><td class="la2">231</td><td><span class="nm"><span class="pre" style="margin-left:49.5px"><i style="width:12px">├</i><i style="width:9px">─</i><i style="width:9px">─</i><i style="width:9px">─</i></span>消息提醒</span></td><td><span style="letter-spacing:0.534px">PublicRule/remind</span></td><td></td><td><span class="lb ly">正常</span></td><td><span class="lb ld">否</span></td><td>4级</td><td class="la2">0</td><td></td><td><div class="inp">1000</div></td><td><svg class="ic" width="15.09" height="17.6" viewBox="0.0 -1536.0 1536 1792" style="left:10.7px;top:11.2px"><path fill="#5e9fd3" transform="scale(1 -1)" d="M1216 576v128q0 26 -19 45t-45 19h-256v256q0 26 -19 45t-45 19h-128q-26 0 -45 -19t-19 -45v-256h-256q-26 0 -45 -19t-19 -45v-128q0 -26 19 -45t45 -19h256v-256q0 -26 19 -45t45 -19h128q26 0 45 19t19 45v256h256q26 0 45 19t19 45zM1536 640q0 -209 -103 -385.5 t-279.5 -279.5t-385.5 -103t-385.5 103t-279.5 279.5t-103 385.5t103 385.5t279.5 279.5t385.5 103t385.5 -103t279.5 -279.5t103 -385.5z"/></svg><svg class="ic" width="15.09" height="17.6" viewBox="0.0 -1536.0 1536 1792" style="left:34.8px;top:11.2px"><path fill="#78b45a" transform="scale(1 -1)" d="M363 0l91 91l-235 235l-91 -91v-107h128v-128h107zM886 928q0 22 -22 22q-10 0 -17 -7l-542 -542q-7 -7 -7 -17q0 -22 22 -22q10 0 17 7l542 542q7 7 7 17zM832 1120l416 -416l-832 -832h-416v416zM1515 1024q0 -53 -37 -90l-166 -166l-416 416l166 165q36 38 90 38 q53 0 91 -38l235 -234q37 -39 37 -91z"/></svg><svg class="ic" width="13.83" height="17.6" viewBox="-20.4 -1556.4 1408 1792" style="left:59px;top:11px"><path fill="#e0705c" transform="scale(1 -1)" d="M512 800v-576q0 -14 -9 -23t-23 -9h-64q-14 0 -23 9t-9 23v576q0 14 9 23t23 9h64q14 0 23 -9t9 -23zM768 800v-576q0 -14 -9 -23t-23 -9h-64q-14 0 -23 9t-9 23v576q0 14 9 23t23 9h64q14 0 23 -9t9 -23zM1024 800v-576q0 -14 -9 -23t-23 -9h-64q-14 0 -23 9t-9 23v576 q0 14 9 23t23 9h64q14 0 23 -9t9 -23zM1152 76v948h-896v-948q0 -22 7 -40.5t14.5 -27t10.5 -8.5h832q3 0 10.5 8.5t14.5 27t7 40.5zM480 1152h448l-48 117q-7 9 -17 11h-317q-10 -2 -17 -11zM1408 1120v-64q0 -14 -9 -23t-23 -9h-96v-948q0 -83 -47 -143.5t-113 -60.5h-832 q-66 0 -113 58.5t-47 141.5v952h-96q-14 0 -23 9t-9 23v64q0 14 9 23t23 9h309l70 167q15 37 54 63t79 26h320q40 0 79 -26t54 -63l70 -167h309q14 0 23 -9t9 -23z"/></svg><div class="btn">权限信息</div></td></tr><tr><td class="la2">3</td><td><span class="nm"><span class="pre" style="margin-left:9.5px"><i style="width:12px">├</i><i style="width:9px">─</i></span>设置</span></td><td></td><td></td><td><span class="lb ly">正常</span></td><td><span class="lb lp">是</span></td><td>2级</td><td class="la2">13</td><td><svg class="ic" width="11.14" height="13" viewBox="0.0 -1536.0 1536 1792" style="left:8px;top:16px"><path fill="#393939" transform="scale(1 -1)" d="M1024 640q0 106 -75 181t-181 75t-181 -75t-75 -181t75 -181t181 -75t181 75t75 181zM1536 749v-222q0 -12 -8 -23t-20 -13l-185 -28q-19 -54 -39 -91q35 -50 107 -138q10 -12 10 -25t-9 -23q-27 -37 -99 -108t-94 -71q-12 0 -26 9l-138 108q-44 -23 -91 -38 q-16 -136 -29 -186q-7 -28 -36 -28h-222q-14 0 -24.5 8.5t-11.5 21.5l-28 184q-49 16 -90 37l-141 -107q-10 -9 -25 -9q-14 0 -25 11q-126 114 -165 168q-7 10 -7 23q0 12 8 23q15 21 51 66.5t54 70.5q-27 50 -41 99l-183 27q-13 2 -21 12.5t-8 23.5v222q0 12 8 23t19 13 l186 28q14 46 39 92q-40 57 -107 138q-10 12 -10 24q0 10 9 23q26 36 98.5 107.5t94.5 71.5q13 0 26 -10l138 -107q44 23 91 38q16 136 29 186q7 28 36 28h222q14 0 24.5 -8.5t11.5 -21.5l28 -184q49 -16 90 -37l142 107q9 9 24 9q13 0 25 -10q129 -119 165 -170q7 -8 7 -22 q0 -12 -8 -23q-15 -21 -51 -66.5t-54 -70.5q26 -50 41 -98l183 -28q13 -2 21 -12.5t8 -23.5z"/></svg><span style="padding-left:16px;letter-spacing:0.832px">fa-cog</span></td><td><div class="inp">8000</div></td><td><svg class="ic" width="15.09" height="17.6" viewBox="0.0 -1536.0 1536 1792" style="left:10.7px;top:11.2px"><path fill="#5e9fd3" transform="scale(1 -1)" d="M1216 576v128q0 26 -19 45t-45 19h-256v256q0 26 -19 45t-45 19h-128q-26 0 -45 -19t-19 -45v-256h-256q-26 0 -45 -19t-19 -45v-128q0 -26 19 -45t45 -19h256v-256q0 -26 19 -45t45 -19h128q26 0 45 19t19 45v256h256q26 0 45 19t19 45zM1536 640q0 -209 -103 -385.5 t-279.5 -279.5t-385.5 -103t-385.5 103t-279.5 279.5t-103 385.5t103 385.5t279.5 279.5t385.5 103t385.5 -103t279.5 -279.5t103 -385.5z"/></svg><svg class="ic" width="15.09" height="17.6" viewBox="0.0 -1536.0 1536 1792" style="left:34.8px;top:11.2px"><path fill="#78b45a" transform="scale(1 -1)" d="M363 0l91 91l-235 235l-91 -91v-107h128v-128h107zM886 928q0 22 -22 22q-10 0 -17 -7l-542 -542q-7 -7 -7 -17q0 -22 22 -22q10 0 17 7l542 542q7 7 7 17zM832 1120l416 -416l-832 -832h-416v416zM1515 1024q0 -53 -37 -90l-166 -166l-416 416l166 165q36 38 90 38 q53 0 91 -38l235 -234q37 -39 37 -91z"/></svg><svg class="ic" width="13.83" height="17.6" viewBox="-20.4 -1556.4 1408 1792" style="left:59px;top:11px"><path fill="#e0705c" transform="scale(1 -1)" d="M512 800v-576q0 -14 -9 -23t-23 -9h-64q-14 0 -23 9t-9 23v576q0 14 9 23t23 9h64q14 0 23 -9t9 -23zM768 800v-576q0 -14 -9 -23t-23 -9h-64q-14 0 -23 9t-9 23v576q0 14 9 23t23 9h64q14 0 23 -9t9 -23zM1024 800v-576q0 -14 -9 -23t-23 -9h-64q-14 0 -23 9t-9 23v576 q0 14 9 23t23 9h64q14 0 23 -9t9 -23zM1152 76v948h-896v-948q0 -22 7 -40.5t14.5 -27t10.5 -8.5h832q3 0 10.5 8.5t14.5 27t7 40.5zM480 1152h448l-48 117q-7 9 -17 11h-317q-10 -2 -17 -11zM1408 1120v-64q0 -14 -9 -23t-23 -9h-96v-948q0 -83 -47 -143.5t-113 -60.5h-832 q-66 0 -113 58.5t-47 141.5v952h-96q-14 0 -23 9t-9 23v64q0 14 9 23t23 9h309l70 167q15 37 54 63t79 26h320q40 0 79 -26t54 -63l70 -167h309q14 0 23 -9t9 -23z"/></svg><div class="btn">权限信息</div></td></tr><tr><td class="la2">104</td><td><span class="nm"><span class="pre" style="margin-left:29.5px"><i style="width:12px">├</i><i style="width:9px">─</i><i style="width:9px">─</i></span>系统设置</span></td><td><span style="letter-spacing:0.774px">Config/index</span></td><td></td><td><span class="lb ly">正常</span></td><td><span class="lb lp">是</span></td><td>3级</td><td class="la2">12</td><td></td><td><div class="inp">1010</div></td><td><svg class="ic" width="15.09" height="17.6" viewBox="0.0 -1536.0 1536 1792" style="left:10.7px;top:11.2px"><path fill="#5e9fd3" transform="scale(1 -1)" d="M1216 576v128q0 26 -19 45t-45 19h-256v256q0 26 -19 45t-45 19h-128q-26 0 -45 -19t-19 -45v-256h-256q-26 0 -45 -19t-19 -45v-128q0 -26 19 -45t45 -19h256v-256q0 -26 19 -45t45 -19h128q26 0 45 19t19 45v256h256q26 0 45 19t19 45zM1536 640q0 -209 -103 -385.5 t-279.5 -279.5t-385.5 -103t-385.5 103t-279.5 279.5t-103 385.5t103 385.5t279.5 279.5t385.5 103t385.5 -103t279.5 -279.5t103 -385.5z"/></svg><svg class="ic" width="15.09" height="17.6" viewBox="0.0 -1536.0 1536 1792" style="left:34.8px;top:11.2px"><path fill="#78b45a" transform="scale(1 -1)" d="M363 0l91 91l-235 235l-91 -91v-107h128v-128h107zM886 928q0 22 -22 22q-10 0 -17 -7l-542 -542q-7 -7 -7 -17q0 -22 22 -22q10 0 17 7l542 542q7 7 7 17zM832 1120l416 -416l-832 -832h-416v416zM1515 1024q0 -53 -37 -90l-166 -166l-416 416l166 165q36 38 90 38 q53 0 91 -38l235 -234q37 -39 37 -91z"/></svg><svg class="ic" width="13.83" height="17.6" viewBox="-20.4 -1556.4 1408 1792" style="left:59px;top:11px"><path fill="#e0705c" transform="scale(1 -1)" d="M512 800v-576q0 -14 -9 -23t-23 -9h-64q-14 0 -23 9t-9 23v576q0 14 9 23t23 9h64q14 0 23 -9t9 -23zM768 800v-576q0 -14 -9 -23t-23 -9h-64q-14 0 -23 9t-9 23v576q0 14 9 23t23 9h64q14 0 23 -9t9 -23zM1024 800v-576q0 -14 -9 -23t-23 -9h-64q-14 0 -23 9t-9 23v576 q0 14 9 23t23 9h64q14 0 23 -9t9 -23zM1152 76v948h-896v-948q0 -22 7 -40.5t14.5 -27t10.5 -8.5h832q3 0 10.5 8.5t14.5 27t7 40.5zM480 1152h448l-48 117q-7 9 -17 11h-317q-10 -2 -17 -11zM1408 1120v-64q0 -14 -9 -23t-23 -9h-96v-948q0 -83 -47 -143.5t-113 -60.5h-832 q-66 0 -113 58.5t-47 141.5v952h-96q-14 0 -23 9t-9 23v64q0 14 9 23t23 9h309l70 167q15 37 54 63t79 26h320q40 0 79 -26t54 -63l70 -167h309q14 0 23 -9t9 -23z"/></svg><div class="btn">权限信息</div></td></tr><tr><td class="la2">169</td><td><span class="nm"><span class="pre" style="margin-left:49.5px"><i style="width:12px">├</i><i style="width:9px">─</i><i style="width:9px">─</i><i style="width:9px">─</i></span>基础配置</span></td><td><span style="letter-spacing:0.834px">Config/web</span></td><td></td><td><span class="lb ly">正常</span></td><td><span class="lb ld">否</span></td><td>4级</td><td class="la2">0</td><td></td><td><div class="inp">1111</div></td><td><svg class="ic" width="15.09" height="17.6" viewBox="0.0 -1536.0 1536 1792" style="left:10.7px;top:11.2px"><path fill="#5e9fd3" transform="scale(1 -1)" d="M1216 576v128q0 26 -19 45t-45 19h-256v256q0 26 -19 45t-45 19h-128q-26 0 -45 -19t-19 -45v-256h-256q-26 0 -45 -19t-19 -45v-128q0 -26 19 -45t45 -19h256v-256q0 -26 19 -45t45 -19h128q26 0 45 19t19 45v256h256q26 0 45 19t19 45zM1536 640q0 -209 -103 -385.5 t-279.5 -279.5t-385.5 -103t-385.5 103t-279.5 279.5t-103 385.5t103 385.5t279.5 279.5t385.5 103t385.5 -103t279.5 -279.5t103 -385.5z"/></svg><svg class="ic" width="15.09" height="17.6" viewBox="0.0 -1536.0 1536 1792" style="left:34.8px;top:11.2px"><path fill="#78b45a" transform="scale(1 -1)" d="M363 0l91 91l-235 235l-91 -91v-107h128v-128h107zM886 928q0 22 -22 22q-10 0 -17 -7l-542 -542q-7 -7 -7 -17q0 -22 22 -22q10 0 17 7l542 542q7 7 7 17zM832 1120l416 -416l-832 -832h-416v416zM1515 1024q0 -53 -37 -90l-166 -166l-416 416l166 165q36 38 90 38 q53 0 91 -38l235 -234q37 -39 37 -91z"/></svg><svg class="ic" width="13.83" height="17.6" viewBox="-20.4 -1556.4 1408 1792" style="left:59px;top:11px"><path fill="#e0705c" transform="scale(1 -1)" d="M512 800v-576q0 -14 -9 -23t-23 -9h-64q-14 0 -23 9t-9 23v576q0 14 9 23t23 9h64q14 0 23 -9t9 -23zM768 800v-576q0 -14 -9 -23t-23 -9h-64q-14 0 -23 9t-9 23v576q0 14 9 23t23 9h64q14 0 23 -9t9 -23zM1024 800v-576q0 -14 -9 -23t-23 -9h-64q-14 0 -23 9t-9 23v576 q0 14 9 23t23 9h64q14 0 23 -9t9 -23zM1152 76v948h-896v-948q0 -22 7 -40.5t14.5 -27t10.5 -8.5h832q3 0 10.5 8.5t14.5 27t7 40.5zM480 1152h448l-48 117q-7 9 -17 11h-317q-10 -2 -17 -11zM1408 1120v-64q0 -14 -9 -23t-23 -9h-96v-948q0 -83 -47 -143.5t-113 -60.5h-832 q-66 0 -113 58.5t-47 141.5v952h-96q-14 0 -23 9t-9 23v64q0 14 9 23t23 9h309l70 167q15 37 54 63t79 26h320q40 0 79 -26t54 -63l70 -167h309q14 0 23 -9t9 -23z"/></svg><div class="btn">权限信息</div></td></tr><tr><td class="la2">384</td><td><span class="nm"><span class="pre" style="margin-left:49.5px"><i style="width:12px">├</i><i style="width:9px">─</i><i style="width:9px">─</i><i style="width:9px">─</i></span>运营配置</span></td><td><span style="letter-spacing:0.751px">Config/operate</span></td><td></td><td><span class="lb ly">正常</span></td><td><span class="lb ld">否</span></td><td>4级</td><td class="la2">0</td><td></td><td><div class="inp">1103</div></td><td><svg class="ic" width="15.09" height="17.6" viewBox="0.0 -1536.0 1536 1792" style="left:10.7px;top:11.2px"><path fill="#5e9fd3" transform="scale(1 -1)" d="M1216 576v128q0 26 -19 45t-45 19h-256v256q0 26 -19 45t-45 19h-128q-26 0 -45 -19t-19 -45v-256h-256q-26 0 -45 -19t-19 -45v-128q0 -26 19 -45t45 -19h256v-256q0 -26 19 -45t45 -19h128q26 0 45 19t19 45v256h256q26 0 45 19t19 45zM1536 640q0 -209 -103 -385.5 t-279.5 -279.5t-385.5 -103t-385.5 103t-279.5 279.5t-103 385.5t103 385.5t279.5 279.5t385.5 103t385.5 -103t279.5 -279.5t103 -385.5z"/></svg><svg class="ic" width="15.09" height="17.6" viewBox="0.0 -1536.0 1536 1792" style="left:34.8px;top:11.2px"><path fill="#78b45a" transform="scale(1 -1)" d="M363 0l91 91l-235 235l-91 -91v-107h128v-128h107zM886 928q0 22 -22 22q-10 0 -17 -7l-542 -542q-7 -7 -7 -17q0 -22 22 -22q10 0 17 7l542 542q7 7 7 17zM832 1120l416 -416l-832 -832h-416v416zM1515 1024q0 -53 -37 -90l-166 -166l-416 416l166 165q36 38 90 38 q53 0 91 -38l235 -234q37 -39 37 -91z"/></svg><svg class="ic" width="13.83" height="17.6" viewBox="-20.4 -1556.4 1408 1792" style="left:59px;top:11px"><path fill="#e0705c" transform="scale(1 -1)" d="M512 800v-576q0 -14 -9 -23t-23 -9h-64q-14 0 -23 9t-9 23v576q0 14 9 23t23 9h64q14 0 23 -9t9 -23zM768 800v-576q0 -14 -9 -23t-23 -9h-64q-14 0 -23 9t-9 23v576q0 14 9 23t23 9h64q14 0 23 -9t9 -23zM1024 800v-576q0 -14 -9 -23t-23 -9h-64q-14 0 -23 9t-9 23v576 q0 14 9 23t23 9h64q14 0 23 -9t9 -23zM1152 76v948h-896v-948q0 -22 7 -40.5t14.5 -27t10.5 -8.5h832q3 0 10.5 8.5t14.5 27t7 40.5zM480 1152h448l-48 117q-7 9 -17 11h-317q-10 -2 -17 -11zM1408 1120v-64q0 -14 -9 -23t-23 -9h-96v-948q0 -83 -47 -143.5t-113 -60.5h-832 q-66 0 -113 58.5t-47 141.5v952h-96q-14 0 -23 9t-9 23v64q0 14 9 23t23 9h309l70 167q15 37 54 63t79 26h320q40 0 79 -26t54 -63l70 -167h309q14 0 23 -9t9 -23z"/></svg><div class="btn">权限信息</div></td></tr><tr><td class="la2">429</td><td><span class="nm"><span class="pre" style="margin-left:49.5px"><i style="width:12px">├</i><i style="width:9px">─</i><i style="width:9px">─</i><i style="width:9px">─</i></span>订单配置</span></td><td><span style="letter-spacing:0.841px">Config/order</span></td><td></td><td><span class="lb ly">正常</span></td><td><span class="lb ld">否</span></td><td>4级</td><td class="la2">0</td><td></td><td><div class="inp">1103</div></td><td><svg class="ic" width="15.09" height="17.6" viewBox="0.0 -1536.0 1536 1792" style="left:10.7px;top:11.2px"><path fill="#5e9fd3" transform="scale(1 -1)" d="M1216 576v128q0 26 -19 45t-45 19h-256v256q0 26 -19 45t-45 19h-128q-26 0 -45 -19t-19 -45v-256h-256q-26 0 -45 -19t-19 -45v-128q0 -26 19 -45t45 -19h256v-256q0 -26 19 -45t45 -19h128q26 0 45 19t19 45v256h256q26 0 45 19t19 45zM1536 640q0 -209 -103 -385.5 t-279.5 -279.5t-385.5 -103t-385.5 103t-279.5 279.5t-103 385.5t103 385.5t279.5 279.5t385.5 103t385.5 -103t279.5 -279.5t103 -385.5z"/></svg><svg class="ic" width="15.09" height="17.6" viewBox="0.0 -1536.0 1536 1792" style="left:34.8px;top:11.2px"><path fill="#78b45a" transform="scale(1 -1)" d="M363 0l91 91l-235 235l-91 -91v-107h128v-128h107zM886 928q0 22 -22 22q-10 0 -17 -7l-542 -542q-7 -7 -7 -17q0 -22 22 -22q10 0 17 7l542 542q7 7 7 17zM832 1120l416 -416l-832 -832h-416v416zM1515 1024q0 -53 -37 -90l-166 -166l-416 416l166 165q36 38 90 38 q53 0 91 -38l235 -234q37 -39 37 -91z"/></svg><svg class="ic" width="13.83" height="17.6" viewBox="-20.4 -1556.4 1408 1792" style="left:59px;top:11px"><path fill="#e0705c" transform="scale(1 -1)" d="M512 800v-576q0 -14 -9 -23t-23 -9h-64q-14 0 -23 9t-9 23v576q0 14 9 23t23 9h64q14 0 23 -9t9 -23zM768 800v-576q0 -14 -9 -23t-23 -9h-64q-14 0 -23 9t-9 23v576q0 14 9 23t23 9h64q14 0 23 -9t9 -23zM1024 800v-576q0 -14 -9 -23t-23 -9h-64q-14 0 -23 9t-9 23v576 q0 14 9 23t23 9h64q14 0 23 -9t9 -23zM1152 76v948h-896v-948q0 -22 7 -40.5t14.5 -27t10.5 -8.5h832q3 0 10.5 8.5t14.5 27t7 40.5zM480 1152h448l-48 117q-7 9 -17 11h-317q-10 -2 -17 -11zM1408 1120v-64q0 -14 -9 -23t-23 -9h-96v-948q0 -83 -47 -143.5t-113 -60.5h-832 q-66 0 -113 58.5t-47 141.5v952h-96q-14 0 -23 9t-9 23v64q0 14 9 23t23 9h309l70 167q15 37 54 63t79 26h320q40 0 79 -26t54 -63l70 -167h309q14 0 23 -9t9 -23z"/></svg><div class="btn">权限信息</div></td></tr><tr><td class="la2">430</td><td><span class="nm"><span class="pre" style="margin-left:49.5px"><i style="width:12px">├</i><i style="width:9px">─</i><i style="width:9px">─</i><i style="width:9px">─</i></span>支付配置</span></td><td><span style="letter-spacing:0.6px">Config/pay</span></td><td></td><td><span class="lb ly">正常</span></td><td><span class="lb ld">否</span></td><td>4级</td><td class="la2">0</td><td></td><td><div class="inp">1104</div></td><td><svg class="ic" width="15.09" height="17.6" viewBox="0.0 -1536.0 1536 1792" style="left:10.7px;top:11.2px"><path fill="#5e9fd3" transform="scale(1 -1)" d="M1216 576v128q0 26 -19 45t-45 19h-256v256q0 26 -19 45t-45 19h-128q-26 0 -45 -19t-19 -45v-256h-256q-26 0 -45 -19t-19 -45v-128q0 -26 19 -45t45 -19h256v-256q0 -26 19 -45t45 -19h128q26 0 45 19t19 45v256h256q26 0 45 19t19 45zM1536 640q0 -209 -103 -385.5 t-279.5 -279.5t-385.5 -103t-385.5 103t-279.5 279.5t-103 385.5t103 385.5t279.5 279.5t385.5 103t385.5 -103t279.5 -279.5t103 -385.5z"/></svg><svg class="ic" width="15.09" height="17.6" viewBox="0.0 -1536.0 1536 1792" style="left:34.8px;top:11.2px"><path fill="#78b45a" transform="scale(1 -1)" d="M363 0l91 91l-235 235l-91 -91v-107h128v-128h107zM886 928q0 22 -22 22q-10 0 -17 -7l-542 -542q-7 -7 -7 -17q0 -22 22 -22q10 0 17 7l542 542q7 7 7 17zM832 1120l416 -416l-832 -832h-416v416zM1515 1024q0 -53 -37 -90l-166 -166l-416 416l166 165q36 38 90 38 q53 0 91 -38l235 -234q37 -39 37 -91z"/></svg><svg class="ic" width="13.83" height="17.6" viewBox="-20.4 -1556.4 1408 1792" style="left:59px;top:11px"><path fill="#e0705c" transform="scale(1 -1)" d="M512 800v-576q0 -14 -9 -23t-23 -9h-64q-14 0 -23 9t-9 23v576q0 14 9 23t23 9h64q14 0 23 -9t9 -23zM768 800v-576q0 -14 -9 -23t-23 -9h-64q-14 0 -23 9t-9 23v576q0 14 9 23t23 9h64q14 0 23 -9t9 -23zM1024 800v-576q0 -14 -9 -23t-23 -9h-64q-14 0 -23 9t-9 23v576 q0 14 9 23t23 9h64q14 0 23 -9t9 -23zM1152 76v948h-896v-948q0 -22 7 -40.5t14.5 -27t10.5 -8.5h832q3 0 10.5 8.5t14.5 27t7 40.5zM480 1152h448l-48 117q-7 9 -17 11h-317q-10 -2 -17 -11zM1408 1120v-64q0 -14 -9 -23t-23 -9h-96v-948q0 -83 -47 -143.5t-113 -60.5h-832 q-66 0 -113 58.5t-47 141.5v952h-96q-14 0 -23 9t-9 23v64q0 14 9 23t23 9h309l70 167q15 37 54 63t79 26h320q40 0 79 -26t54 -63l70 -167h309q14 0 23 -9t9 -23z"/></svg><div class="btn">权限信息</div></td></tr></tbody></table>
<div id="sidebar"><div class="mi "><svg class="ic" width="16.71" height="18" viewBox="15.6 -1565.9 1664 1792" style="left:10px;top:12px"><path fill="#585858" transform="scale(1 -1)" d="M1408 544v-480q0 -26 -19 -45t-45 -19h-384v384h-256v-384h-384q-26 0 -45 19t-19 45v480q0 1 0.5 3t0.5 3l575 474l575 -474q1 -2 1 -6zM1631 613l-62 -74q-8 -9 -21 -11h-3q-13 0 -21 7l-692 577l-692 -577q-12 -8 -24 -7q-13 2 -21 11l-62 74q-8 10 -7 23.5t11 21.5 l719 599q32 26 76 26t76 -26l244 -204v195q0 14 9 23t23 9h192q14 0 23 -9t9 -23v-408l219 -182q10 -8 11 -21.5t-7 -23.5z"/></svg>首页<svg class="ic" width="11.57" height="18" viewBox="-19.9 -1476.3 1152 1792" style="left:162px;top:10px"><path fill="#666" transform="scale(1 -1)" d="M1075 800q0 -13 -10 -23l-466 -466q-10 -10 -23 -10t-23 10l-466 466q-10 10 -10 23t10 23l50 50q10 10 23 10t23 -10l393 -393l393 393q10 10 23 10t23 -10l50 -50q10 -10 10 -23z"/></svg></div><div class="mi open"><svg class="ic" width="15.43" height="18" viewBox="-48.4 -1565.9 1536 1792" style="left:10px;top:12px"><path fill="#1963aa" transform="scale(1 -1)" d="M1024 640q0 106 -75 181t-181 75t-181 -75t-75 -181t75 -181t181 -75t181 75t75 181zM1536 749v-222q0 -12 -8 -23t-20 -13l-185 -28q-19 -54 -39 -91q35 -50 107 -138q10 -12 10 -25t-9 -23q-27 -37 -99 -108t-94 -71q-12 0 -26 9l-138 108q-44 -23 -91 -38 q-16 -136 -29 -186q-7 -28 -36 -28h-222q-14 0 -24.5 8.5t-11.5 21.5l-28 184q-49 16 -90 37l-141 -107q-10 -9 -25 -9q-14 0 -25 11q-126 114 -165 168q-7 10 -7 23q0 12 8 23q15 21 51 66.5t54 70.5q-27 50 -41 99l-183 27q-13 2 -21 12.5t-8 23.5v222q0 12 8 23t19 13 l186 28q14 46 39 92q-40 57 -107 138q-10 12 -10 24q0 10 9 23q26 36 98.5 107.5t94.5 71.5q13 0 26 -10l138 -107q44 23 91 38q16 136 29 186q7 28 36 28h222q14 0 24.5 -8.5t11.5 -21.5l28 -184q49 -16 90 -37l142 107q9 9 24 9q13 0 25 -10q129 -119 165 -170q7 -8 7 -22 q0 -12 -8 -23q-15 -21 -51 -66.5t-54 -70.5q26 -50 41 -98l183 -28q13 -2 21 -12.5t8 -23.5z"/></svg>设置<svg class="ic" width="11.57" height="18" viewBox="-19.9 -1476.3 1152 1792" style="left:162px;top:10px"><path fill="#1963aa" transform="scale(1 -1)" d="M1075 800q0 -13 -10 -23l-466 -466q-10 -10 -23 -10t-23 10l-466 466q-10 10 -10 23t10 23l50 50q10 10 23 10t23 -10l393 -393l393 393q10 10 23 10t23 -10l50 -50q10 -10 10 -23z"/></svg></div><div class="sub"><div class="vline"></div><div class="si first"><div class="stub"></div>系统设置</div><div class="si"><div class="stub"></div>支付配置</div><div class="si"><div class="stub"></div>访问限制</div><div class="si"><div class="stub"></div>管理员列表</div><div class="si"><div class="stub"></div>权限管理</div><div class="si"><div class="stub"></div>行为列表</div><div class="si"><div class="stub"></div>操作日志</div><div class="si act"><div class="mask"></div><svg class="ic" width="6.86" height="12" viewBox="29.9 -1491.2 1024 1792" style="left:11px;top:11px;z-index:3"><path fill="#c86139" transform="scale(1 -1)" d="M595 576q0 -13 -10 -23l-466 -466q-10 -10 -23 -10t-23 10l-50 50q-10 10 -10 23t10 23l393 393l-393 393q-10 10 -10 23t10 23l50 50q10 10 23 10t23 -10l466 -466q10 -10 10 -23zM979 576q0 -13 -10 -23l-466 -466q-10 -10 -23 -10t-23 10l-50 50q-10 10 -10 23t10 23 l393 393l-393 393q-10 10 -10 23t10 23l50 50q10 10 23 10t23 -10l466 -466q10 -10 10 -23z"/></svg>节点管理<div class="tri"></div></div><div class="si"><div class="stub"></div>文件库管理</div><div class="si"><div class="stub"></div>表管理</div><div class="si"><div class="stub"></div>数据备份</div><div class="si"><div class="stub"></div>Redis缓存管理</div><div class="si"><div class="stub"></div>页面管理</div></div><div class="mi "><svg class="ic" width="15.43" height="18" viewBox="-48.4 -1565.9 1536 1792" style="left:10px;top:12px"><path fill="#585858" transform="scale(1 -1)" d="M1024 1024v472q22 -14 36 -28l408 -408q14 -14 28 -36h-472zM896 992q0 -40 28 -68t68 -28h544v-1056q0 -40 -28 -68t-68 -28h-1344q-40 0 -68 28t-28 68v1600q0 40 28 68t68 28h800v-544z"/></svg>内容<svg class="ic" width="11.57" height="18" viewBox="-19.9 -1476.3 1152 1792" style="left:162px;top:10px"><path fill="#666" transform="scale(1 -1)" d="M1075 800q0 -13 -10 -23l-466 -466q-10 -10 -23 -10t-23 10l-466 466q-10 10 -10 23t10 23l50 50q10 10 23 10t23 -10l393 -393l393 393q10 10 23 10t23 -10l50 -50q10 -10 10 -23z"/></svg></div><div class="mi "><svg class="ic" width="12.86" height="18" viewBox="22.8 -1565.9 1280 1792" style="left:12px;top:12px"><path fill="#585858" transform="scale(1 -1)" d="M1280 137q0 -109 -62.5 -187t-150.5 -78h-854q-88 0 -150.5 78t-62.5 187q0 85 8.5 160.5t31.5 152t58.5 131t94 89t134.5 34.5q131 -128 313 -128t313 128q76 0 134.5 -34.5t94 -89t58.5 -131t31.5 -152t8.5 -160.5zM1024 1024q0 -159 -112.5 -271.5t-271.5 -112.5 t-271.5 112.5t-112.5 271.5t112.5 271.5t271.5 112.5t271.5 -112.5t112.5 -271.5z"/></svg>会员<svg class="ic" width="11.57" height="18" viewBox="-19.9 -1476.3 1152 1792" style="left:162px;top:10px"><path fill="#666" transform="scale(1 -1)" d="M1075 800q0 -13 -10 -23l-466 -466q-10 -10 -23 -10t-23 10l-466 466q-10 10 -10 23t10 23l50 50q10 10 23 10t23 -10l393 -393l393 393q10 10 23 10t23 -10l50 -50q10 -10 10 -23z"/></svg></div><div class="mi "><svg class="ic" width="18.0" height="18" viewBox="-19.9 -1565.9 1792 1792" style="left:9px;top:12px"><path fill="#585858" transform="scale(1 -1)" d="M768 646l546 -546q-106 -108 -247.5 -168t-298.5 -60q-209 0 -385.5 103t-279.5 279.5t-103 385.5t103 385.5t279.5 279.5t385.5 103v-762zM955 640h773q0 -157 -60 -298.5t-168 -247.5zM1664 768h-768v768q209 0 385.5 -103t279.5 -279.5t103 -385.5z"/></svg>数据中心<svg class="ic" width="11.57" height="18" viewBox="-19.9 -1476.3 1152 1792" style="left:162px;top:10px"><path fill="#666" transform="scale(1 -1)" d="M1075 800q0 -13 -10 -23l-466 -466q-10 -10 -23 -10t-23 10l-466 466q-10 10 -10 23t10 23l50 50q10 10 23 10t23 -10l393 -393l393 393q10 10 23 10t23 -10l50 -50q10 -10 10 -23z"/></svg></div><div class="mi "><svg class="ic" width="19.29" height="18" viewBox="-55.5 -1565.9 1920 1792" style="left:8px;top:12px"><path fill="#585858" transform="scale(1 -1)" d="M768 384h384v96h-128v448h-114l-148 -137l77 -80q42 37 55 57h2v-288h-128v-96zM1280 640q0 -70 -21 -142t-59.5 -134t-101.5 -101t-138 -39t-138 39t-101.5 101t-59.5 134t-21 142t21 142t59.5 134t101.5 101t138 39t138 -39t101.5 -101t59.5 -134t21 -142zM1792 384 v512q-106 0 -181 75t-75 181h-1152q0 -106 -75 -181t-181 -75v-512q106 0 181 -75t75 -181h1152q0 106 75 181t181 75zM1920 1216v-1152q0 -26 -19 -45t-45 -19h-1792q-26 0 -45 19t-19 45v1152q0 26 19 45t45 19h1792q26 0 45 -19t19 -45z"/></svg>财务管理<svg class="ic" width="11.57" height="18" viewBox="-19.9 -1476.3 1152 1792" style="left:162px;top:10px"><path fill="#666" transform="scale(1 -1)" d="M1075 800q0 -13 -10 -23l-466 -466q-10 -10 -23 -10t-23 10l-466 466q-10 10 -10 23t10 23l50 50q10 10 23 10t23 -10l393 -393l393 393q10 10 23 10t23 -10l50 -50q10 -10 10 -23z"/></svg></div><div class="mi "><svg class="ic" width="20.57" height="18" viewBox="8.5 -1565.9 2048 1792" style="left:8px;top:12px"><path fill="#585858" transform="scale(1 -1)" d="M580 1075q0 41 -25 66t-66 25q-43 0 -76 -25.5t-33 -65.5q0 -39 33 -64.5t76 -25.5q41 0 66 24.5t25 65.5zM1323 568q0 28 -25.5 50t-65.5 22q-27 0 -49.5 -22.5t-22.5 -49.5q0 -28 22.5 -50.5t49.5 -22.5q40 0 65.5 22t25.5 51zM1087 1075q0 41 -24.5 66t-65.5 25 q-43 0 -76 -25.5t-33 -65.5q0 -39 33 -64.5t76 -25.5q41 0 65.5 24.5t24.5 65.5zM1722 568q0 28 -26 50t-65 22q-27 0 -49.5 -22.5t-22.5 -49.5q0 -28 22.5 -50.5t49.5 -22.5q39 0 65 22t26 51zM1456 965q-31 4 -70 4q-169 0 -311 -77t-223.5 -208.5t-81.5 -287.5 q0 -78 23 -152q-35 -3 -68 -3q-26 0 -50 1.5t-55 6.5t-44.5 7t-54.5 10.5t-50 10.5l-253 -127l72 218q-290 203 -290 490q0 169 97.5 311t264 223.5t363.5 81.5q176 0 332.5 -66t262 -182.5t136.5 -260.5zM2048 404q0 -117 -68.5 -223.5t-185.5 -193.5l55 -181l-199 109 q-150 -37 -218 -37q-169 0 -311 70.5t-223.5 191.5t-81.5 264t81.5 264t223.5 191.5t311 70.5q161 0 303 -70.5t227.5 -192t85.5 -263.5z"/></svg>微信<svg class="ic" width="11.57" height="18" viewBox="-19.9 -1476.3 1152 1792" style="left:162px;top:10px"><path fill="#666" transform="scale(1 -1)" d="M1075 800q0 -13 -10 -23l-466 -466q-10 -10 -23 -10t-23 10l-466 466q-10 10 -10 23t10 23l50 50q10 10 23 10t23 -10l393 -393l393 393q10 10 23 10t23 -10l50 -50q10 -10 10 -23z"/></svg></div><div id="collapse"><div class="ln"></div><div class="cr"><svg class="ic" width="8.0" height="14" viewBox="0.0 -1536.0 1024 1792" style="left:5px;top:2px"><path fill="#aaa" transform="scale(1 -1)" d="M627 160q0 -13 -10 -23l-50 -50q-10 -10 -23 -10t-23 10l-466 466q-10 10 -10 23t10 23l466 466q10 10 23 10t23 -10l50 -50q10 -10 10 -23t-10 -23l-393 -393l393 -393q10 -10 10 -23zM1011 160q0 -13 -10 -23l-50 -50q-10 -10 -23 -10t-23 10l-466 466q-10 10 -10 23 t10 23l466 466q10 10 23 10t23 -10l50 -50q10 -10 10 -23t-10 -23l-393 -393l393 -393q10 -10 10 -23z"/></svg></div></div></div>
<div id="status">javascript:/*artDialog*/;</div>
<div id="trace"><div class="g"><svg width="30" height="30" viewBox="0 0 30 30" style="position:absolute;left:0;top:0"><path d="M0 0H30L15 11.5Z" fill="#82c35a"/><path fill="#f4f4f4" d="M16.6 4.2C18.6 6.5 19.3 8.4 18.3 10.4C17.5 12 16.3 13.2 14.9 14.3C13 15.8 10.8 17.2 8.6 18.8C6.4 20.4 4.4 21.8 2.9 23.6C2.1 22 1.6 20.4 1.8 18.8C3.2 17 5 15.6 6.9 14.3C8.8 13 10.9 12.1 12.6 10.9C14 9.9 15 8.8 15.4 7.5C15.7 6.4 16.2 5.3 16.6 4.2Z"/><path fill="#f4f4f4" d="M22.5 10.7C24.3 12.6 25.2 14.5 24.5 16.6C24 18.3 23 19.8 21.7 21.1C20.2 22.7 18.4 24.2 16.6 25.6C15.3 26.6 14 27.6 12.6 28.6H4C4.4 26.6 5.4 24.8 6.9 23.4C8.9 21.8 11.3 20.6 13.7 19.4C16 18.2 18.3 17 20 15.4C21.3 14.1 22.1 12.5 22.5 10.7Z"/><path fill="#f4f4f4" d="M26.2 18.6C27.5 21.2 27.8 23.8 27.3 26.8C26.9 28.2 26.2 29.4 25.4 30H17.5C20.2 28.4 22.6 26.6 24.4 24.2C25.5 22.6 26.1 20.7 26.2 18.6Z"/></svg></div><div class="k">0.1183s</div></div>
</body></html>
